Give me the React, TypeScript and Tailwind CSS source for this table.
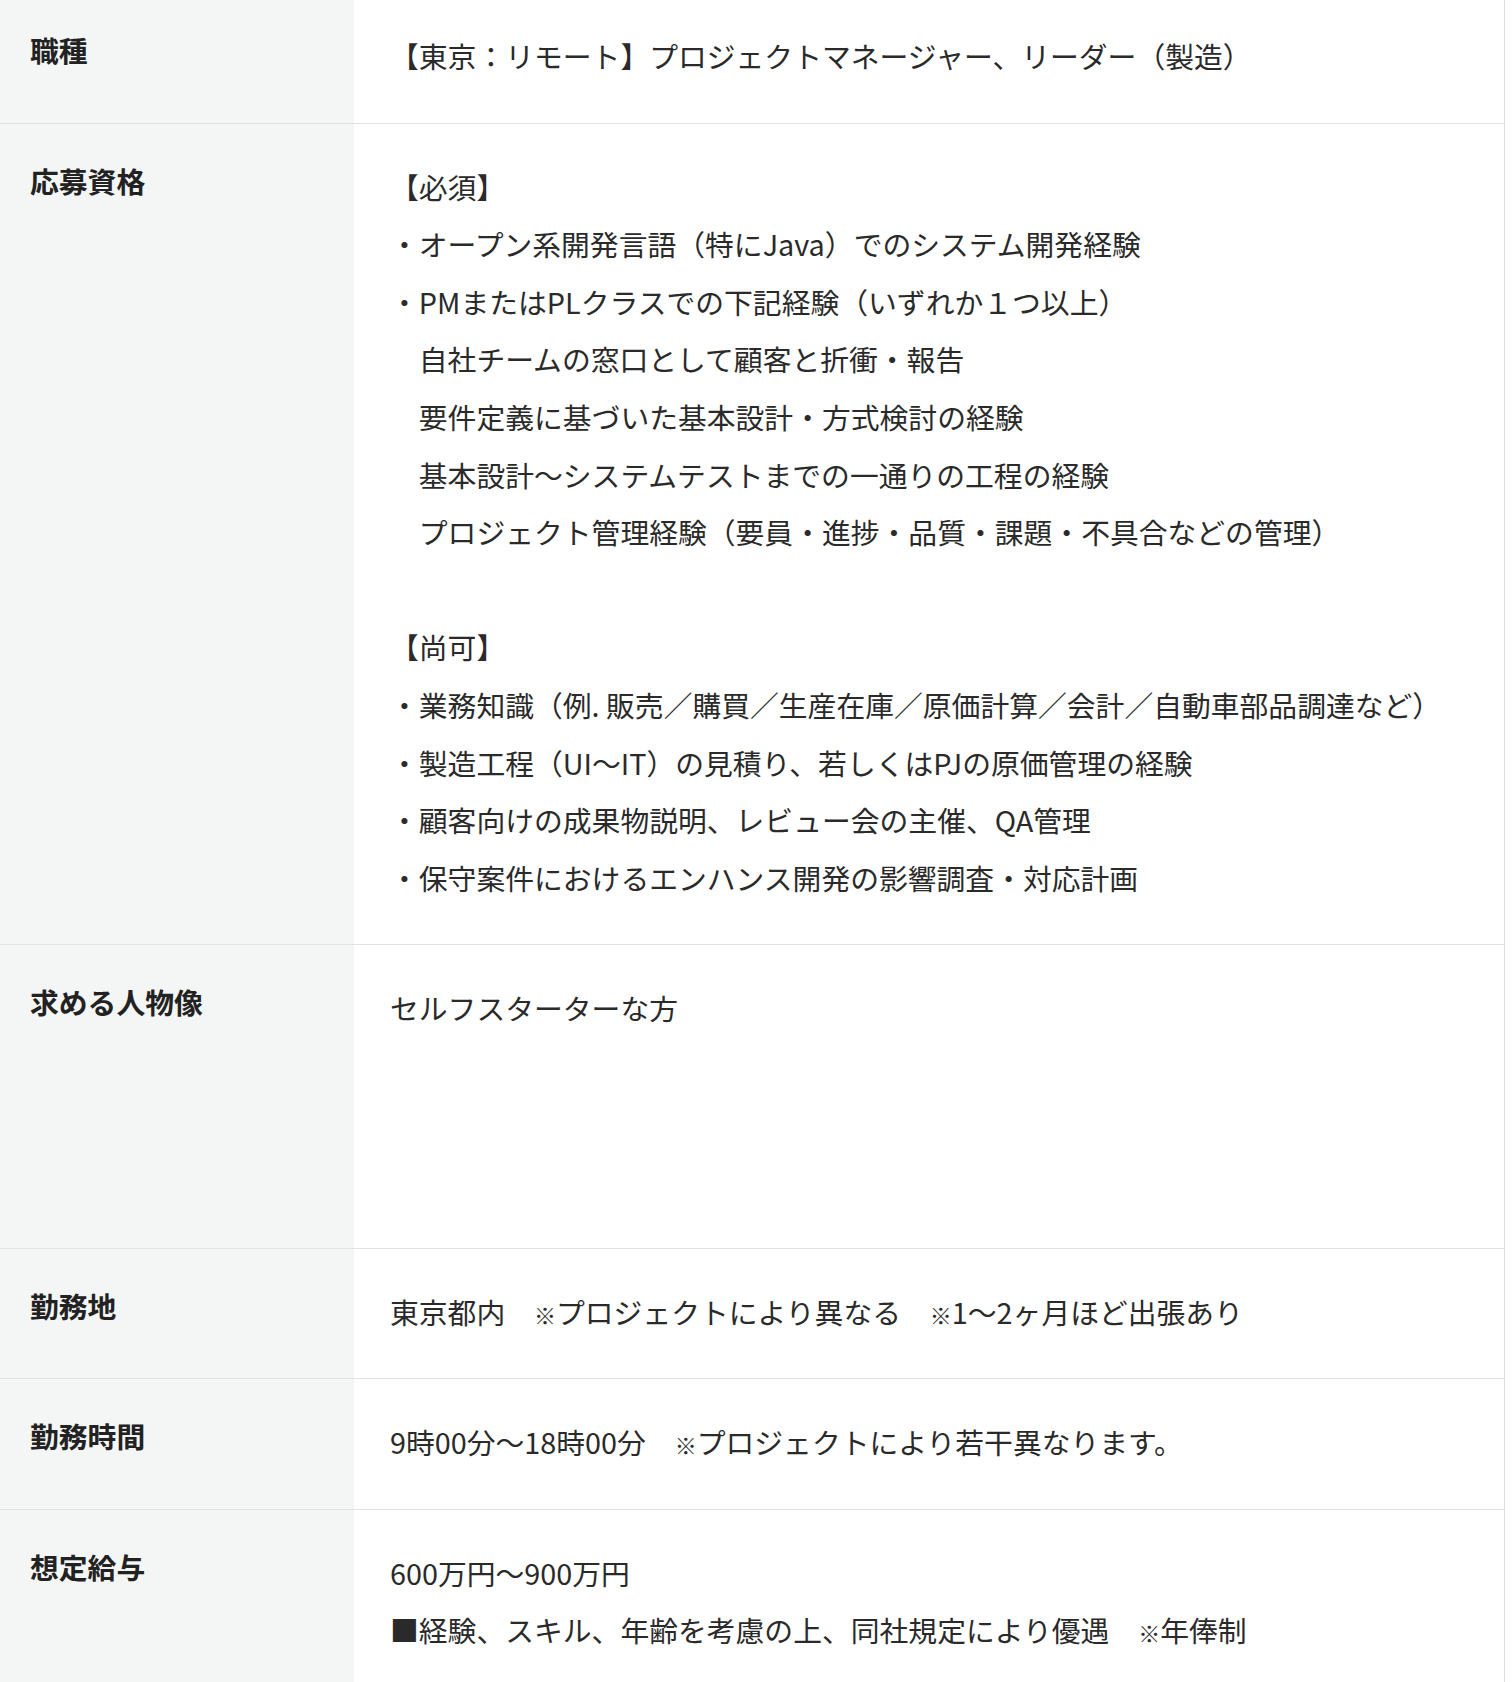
const rows: { label: string; lines: string[] }[] = [
  {
    label: '職種',
    lines: ['【東京：リモート】プロジェクトマネージャー、リーダー（製造）'],
  },
  {
    label: '応募資格',
    lines: [
      '【必須】',
      '・オープン系開発言語（特にJava）でのシステム開発経験',
      '・PMまたはPLクラスでの下記経験（いずれか１つ以上）',
      '　自社チームの窓口として顧客と折衝・報告',
      '　要件定義に基づいた基本設計・方式検討の経験',
      '　基本設計〜システムテストまでの一通りの工程の経験',
      '　プロジェクト管理経験（要員・進捗・品質・課題・不具合などの管理）',
      '',
      '【尚可】',
      '・業務知識（例. 販売／購買／生産在庫／原価計算／会計／自動車部品調達など）',
      '・製造工程（UI〜IT）の見積り、若しくはPJの原価管理の経験',
      '・顧客向けの成果物説明、レビュー会の主催、QA管理',
      '・保守案件におけるエンハンス開発の影響調査・対応計画',
    ],
  },
  {
    label: '求める人物像',
    lines: ['セルフスターターな方', '', '', ''],
  },
  {
    label: '勤務地',
    lines: ['東京都内　※プロジェクトにより異なる　※1〜2ヶ月ほど出張あり'],
  },
  {
    label: '勤務時間',
    lines: ['9時00分〜18時00分　※プロジェクトにより若干異なります。'],
  },
  {
    label: '想定給与',
    lines: ['600万円〜900万円', '■経験、スキル、年齢を考慮の上、同社規定により優遇　※年俸制'],
  },
]

// the ※ mark is drawn smaller in the reference font
function Line({ text }: { text: string }) {
  if (text === '') return <div>{'\u00a0'}</div>
  const parts = text.split('※')
  return (
    <div className="whitespace-pre">
      {parts.map((p, i) => (
        <span key={i}>
          {i > 0 && <span className="text-[22px] leading-none">※</span>}
          {p}
        </span>
      ))}
    </div>
  )
}

export default function App() {
  return (
    <div
      className="min-h-screen bg-white overflow-hidden"
      style={{ fontFamily: '"Noto Sans CJK JP", "Noto Sans", sans-serif' }}
    >
      <dl className="-mt-[7px] w-[1505px] border-r border-[#dedede]">
        {rows.map((row, i) => (
          <div
            key={row.label}
            className={`flex ${i > 0 ? 'border-t border-[#e2e2e2]' : ''}`}
          >
            <dt className="w-[354px] shrink-0 bg-[#f4f6f6] pl-[30px] pr-4 py-9 text-[28.8px] leading-[42px] font-bold text-[#222]">
              {row.label}
            </dt>
            <dd className="flex-1 px-9 pt-[34px] pb-[38px] text-[28.8px] leading-[57.6px] text-[#2a2a2a]">
              {row.lines.map((line, j) => (
                <Line key={j} text={line} />
              ))}
            </dd>
          </div>
        ))}
      </dl>
    </div>
  )
}
